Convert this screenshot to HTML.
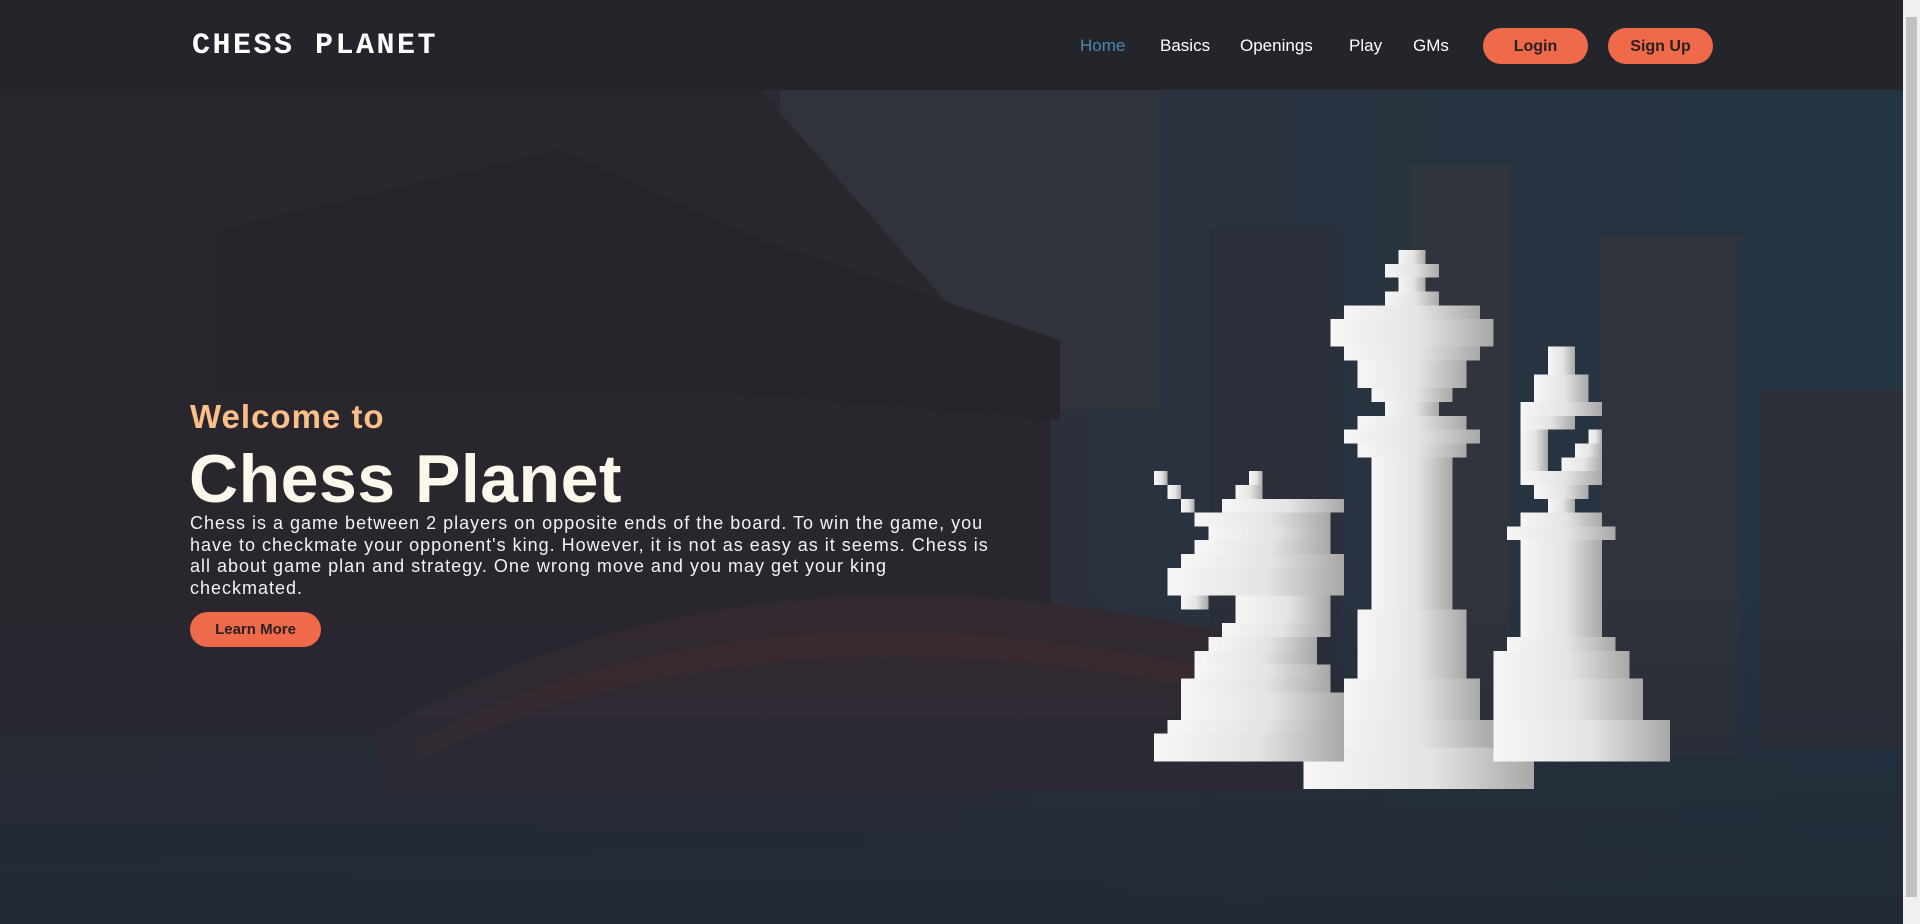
<!DOCTYPE html>
<html><head><meta charset="utf-8"><style>
html,body{margin:0;padding:0;width:1920px;height:924px;overflow:hidden;background:#25272e;font-family:"Liberation Sans",sans-serif}
.bg{position:absolute;left:0;top:90px;width:1903px;height:834px;overflow:hidden}
nav{position:absolute;left:0;top:0;width:1903px;height:90px;background:#24252b}
.logo{position:absolute;left:192px;top:29px;font-family:"Liberation Mono",monospace;font-weight:bold;font-size:30px;letter-spacing:2.5px;color:#fff}
.nl{position:absolute;top:36px;font-size:17px;color:#fff}
.btn{position:absolute;background:#ee6a4b;color:#2a2020;border-radius:18px;font-size:16px;text-align:center;font-weight:bold}
.sb{position:absolute;left:1903px;top:0;width:17px;height:924px;background:#f0f0f0}
.sb div{position:absolute;left:3px;top:17px;width:11px;height:880px;background:#c1c1c1}
h2{position:absolute;left:190px;top:398px;margin:0;font-size:33px;color:#fbbf8a;font-weight:bold;letter-spacing:1px}
h1{position:absolute;left:189px;top:440px;margin:0;font-size:68px;color:#fbf7ea;font-weight:bold;letter-spacing:.5px}
p{position:absolute;left:190px;top:513px;width:810px;margin:0;font-size:18px;line-height:21.5px;color:#f2f2f2;letter-spacing:1px}
</style></head><body>
<div class="bg">
<svg width="1903" height="834" viewBox="0 0 1903 834">
<defs>
<linearGradient id="sky" x1="0" y1="0" x2="1" y2="0"><stop offset="0" stop-color="#2a2a31"/><stop offset=".45" stop-color="#2b2b33"/><stop offset=".6" stop-color="#2b323f"/><stop offset="1" stop-color="#233443"/></linearGradient>
<linearGradient id="low" x1="0" y1="0" x2="0" y2="1"><stop offset="0" stop-color="#232833" stop-opacity="0"/><stop offset="1" stop-color="#222a37"/></linearGradient>
</defs>
<rect width="1903" height="834" fill="url(#sky)"/>
<rect x="780" y="0" width="380" height="320" fill="#31333b"/>
<rect x="1210" y="140" width="130" height="520" fill="#2b2f39"/>
<rect x="1410" y="75" width="100" height="560" fill="#30343c"/>
<rect x="1600" y="145" width="140" height="520" fill="#2f333b"/>
<rect x="1760" y="300" width="143" height="360" fill="#2c3038"/>
<path d="M0 0H760L1050 330V640H0Z" fill="#2a262e"/>
<path d="M220 140L560 60L760 150L1060 250V330L700 300L220 300Z" fill="#27242b"/>
<path d="M380 640Q760 420 1300 560V700H380Z" fill="#342930"/>
<path d="M420 650Q760 470 1260 590V610Q760 500 420 670Z" fill="#3e2b2f"/>
<rect x="0" y="500" width="1903" height="334" fill="url(#low)"/>
</svg>
</div>
<nav>
<div class="logo">CHESS PLANET</div>
<div class="nl" style="left:1080px;color:#4b86b4">Home</div>
<div class="nl" style="left:1160px">Basics</div>
<div class="nl" style="left:1240px">Openings</div>
<div class="nl" style="left:1349px">Play</div>
<div class="nl" style="left:1413px">GMs</div>
<div class="btn" style="left:1483px;top:28px;width:105px;height:36px;line-height:38px">Login</div>
<div class="btn" style="left:1608px;top:28px;width:105px;height:36px;line-height:38px">Sign Up</div>
</nav>
<h2>Welcome to</h2>
<h1>Chess Planet</h1>
<p>Chess is a game between 2 players on opposite ends of the board. To win the game, you have to checkmate your opponent's king. However, it is not as easy as it seems. Chess is all about game plan and strategy. One wrong move and you may get your king checkmated.</p>
<div class="btn" style="left:190px;top:612px;width:131px;height:35px;line-height:36px;font-size:15px">Learn More</div>
<svg style="position:absolute;left:1154px;top:250px" width="516" height="539" viewBox="0 0 38 39" preserveAspectRatio="none" shape-rendering="crispEdges">
<defs><linearGradient id="g" x1="0" y1="0" x2="1" y2="0"><stop offset="0" stop-color="#f6f6f6"/><stop offset=".55" stop-color="#e4e4e4"/><stop offset="1" stop-color="#a8a8a8"/></linearGradient></defs>
<g fill="url(#g)">
<rect x="18" y="0" width="2" height="1"/><rect x="17" y="1" width="4" height="1"/><rect x="18" y="2" width="2" height="1"/><rect x="17" y="3" width="4" height="1"/>
<rect x="14" y="4" width="10" height="1"/><rect x="13" y="5" width="12" height="2"/><rect x="14" y="7" width="10" height="1"/><rect x="15" y="8" width="8" height="2"/><rect x="16" y="10" width="6" height="1"/><rect x="17" y="11" width="4" height="1"/>
<rect x="15" y="12" width="8" height="1"/><rect x="14" y="13" width="10" height="1"/><rect x="15" y="14" width="8" height="1"/>
<rect x="16" y="15" width="6" height="11"/><rect x="15" y="26" width="8" height="5"/><rect x="14" y="31" width="10" height="3"/><rect x="13" y="34" width="12" height="2"/><rect x="11" y="36" width="17" height="3"/>
<rect x="0" y="16" width="1" height="1"/><rect x="7" y="16" width="1" height="1"/><rect x="1" y="17" width="1" height="1"/><rect x="6" y="17" width="2" height="1"/>
<rect x="2" y="18" width="1" height="1"/><rect x="5" y="18" width="9" height="1"/><rect x="3" y="19" width="10" height="1"/><rect x="4" y="20" width="9" height="1"/><rect x="3" y="21" width="10" height="1"/><rect x="2" y="22" width="12" height="1"/><rect x="1" y="23" width="13" height="2"/><rect x="2" y="25" width="2" height="1"/><rect x="6" y="25" width="7" height="2"/><rect x="5" y="27" width="8" height="1"/><rect x="4" y="28" width="8" height="1"/><rect x="3" y="29" width="9" height="1"/><rect x="3" y="30" width="10" height="1"/><rect x="2" y="31" width="11" height="1"/><rect x="2" y="32" width="12" height="2"/><rect x="1" y="34" width="13" height="1"/><rect x="0" y="35" width="14" height="2"/>
<rect x="29" y="7" width="2" height="2"/><rect x="28" y="9" width="4" height="2"/><rect x="27" y="11" width="6" height="1"/><rect x="27" y="12" width="4" height="1"/><rect x="27" y="13" width="2" height="1"/><rect x="32" y="13" width="1" height="1"/><rect x="27" y="14" width="2" height="1"/><rect x="31" y="14" width="2" height="1"/><rect x="27" y="15" width="2" height="1"/><rect x="30" y="15" width="3" height="1"/><rect x="27" y="16" width="6" height="1"/><rect x="28" y="17" width="4" height="1"/><rect x="29" y="18" width="2" height="1"/><rect x="27" y="19" width="6" height="1"/><rect x="26" y="20" width="8" height="1"/><rect x="27" y="21" width="6" height="7"/><rect x="26" y="28" width="8" height="1"/><rect x="25" y="29" width="10" height="2"/><rect x="25" y="31" width="11" height="3"/><rect x="25" y="34" width="13" height="3"/>
</g>
</svg>
<div class="sb"><div></div></div>
</body></html>
